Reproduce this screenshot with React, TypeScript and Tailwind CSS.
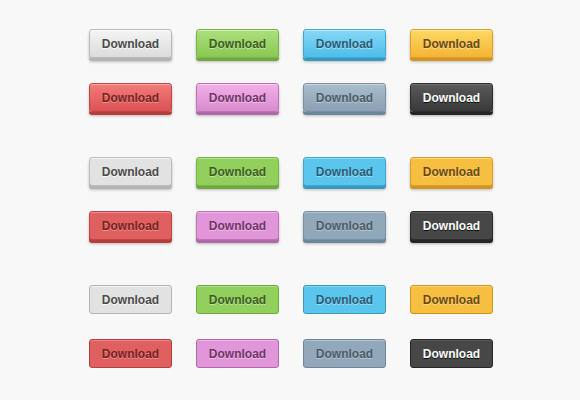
import React from "react";

type Btn = { cls: string };

const set1: string[] = [
  "bg-gradient-to-b from-[#f4f4f4] to-[#dcdcdc] border-[#b9b9b9] text-[#4a4a4a] shadow-[inset_0_1px_0_rgba(255,255,255,0.8),0_3px_0_#b4b4b4,0_4px_3px_rgba(0,0,0,0.25)] [text-shadow:0_1px_0_rgba(255,255,255,0.8)]",
  "bg-gradient-to-b from-[#addf7c] to-[#88c952] border-[#78b444] text-[#3d5c22] shadow-[inset_0_1px_0_rgba(255,255,255,0.45),0_3px_0_#6fa83f,0_4px_3px_rgba(0,0,0,0.25)] [text-shadow:0_1px_0_rgba(255,255,255,0.45)]",
  "bg-gradient-to-b from-[#86d8f5] to-[#4dbeea] border-[#3ea8d2] text-[#2b5a72] shadow-[inset_0_1px_0_rgba(255,255,255,0.45),0_3px_0_#3799c0,0_4px_3px_rgba(0,0,0,0.25)] [text-shadow:0_1px_0_rgba(255,255,255,0.45)]",
  "bg-gradient-to-b from-[#fdd862] to-[#f4b434] border-[#dc9e2a] text-[#6a4814] shadow-[inset_0_1px_0_rgba(255,255,255,0.45),0_3px_0_#cf9425,0_4px_3px_rgba(0,0,0,0.25)] [text-shadow:0_1px_0_rgba(255,255,255,0.45)]",
  "bg-gradient-to-b from-[#f17b7b] to-[#db5151] border-[#c04444] text-[#752222] shadow-[inset_0_1px_0_rgba(255,255,255,0.35),0_3px_0_#b43e3e,0_4px_3px_rgba(0,0,0,0.25)] [text-shadow:0_1px_0_rgba(255,255,255,0.35)]",
  "bg-gradient-to-b from-[#f2b0e6] to-[#d98bd0] border-[#bd72b3] text-[#70346a] shadow-[inset_0_1px_0_rgba(255,255,255,0.45),0_3px_0_#b069a6,0_4px_3px_rgba(0,0,0,0.25)] [text-shadow:0_1px_0_rgba(255,255,255,0.45)]",
  "bg-gradient-to-b from-[#a9bdcc] to-[#8aa1b4] border-[#7890a3] text-[#4a5a66] shadow-[inset_0_1px_0_rgba(255,255,255,0.4),0_3px_0_#6e8598,0_4px_3px_rgba(0,0,0,0.25)] [text-shadow:0_1px_0_rgba(255,255,255,0.4)]",
  "bg-gradient-to-b from-[#5a5a5a] to-[#393939] border-[#2c2c2c] text-white shadow-[inset_0_1px_0_rgba(255,255,255,0.15),0_3px_0_#262626,0_4px_3px_rgba(0,0,0,0.3)] [text-shadow:0_1px_0_rgba(0,0,0,0.8)]",
];

const set2: string[] = [
  "bg-[#e2e2e2] border-[#bcbcbc] text-[#4a4a4a] shadow-[inset_0_1px_0_rgba(255,255,255,0.7),0_3px_0_#b4b4b4,0_4px_3px_rgba(0,0,0,0.25)] [text-shadow:0_1px_0_rgba(255,255,255,0.8)]",
  "bg-[#92d05e] border-[#78b444] text-[#3d5c22] shadow-[inset_0_1px_0_rgba(255,255,255,0.35),0_3px_0_#6fa83f,0_4px_3px_rgba(0,0,0,0.25)] [text-shadow:0_1px_0_rgba(255,255,255,0.45)]",
  "bg-[#5ac6ee] border-[#3ea8d2] text-[#2b5a72] shadow-[inset_0_1px_0_rgba(255,255,255,0.35),0_3px_0_#3799c0,0_4px_3px_rgba(0,0,0,0.25)] [text-shadow:0_1px_0_rgba(255,255,255,0.45)]",
  "bg-[#f7bf3f] border-[#dc9e2a] text-[#6a4814] shadow-[inset_0_1px_0_rgba(255,255,255,0.35),0_3px_0_#cf9425,0_4px_3px_rgba(0,0,0,0.25)] [text-shadow:0_1px_0_rgba(255,255,255,0.45)]",
  "bg-[#e06060] border-[#c04444] text-[#752222] shadow-[inset_0_1px_0_rgba(255,255,255,0.3),0_3px_0_#b43e3e,0_4px_3px_rgba(0,0,0,0.25)] [text-shadow:0_1px_0_rgba(255,255,255,0.35)]",
  "bg-[#e096d8] border-[#bd72b3] text-[#70346a] shadow-[inset_0_1px_0_rgba(255,255,255,0.35),0_3px_0_#b069a6,0_4px_3px_rgba(0,0,0,0.25)] [text-shadow:0_1px_0_rgba(255,255,255,0.45)]",
  "bg-[#90a8ba] border-[#7890a3] text-[#4a5a66] shadow-[inset_0_1px_0_rgba(255,255,255,0.3),0_3px_0_#6e8598,0_4px_3px_rgba(0,0,0,0.25)] [text-shadow:0_1px_0_rgba(255,255,255,0.4)]",
  "bg-[#474747] border-[#2c2c2c] text-white shadow-[inset_0_1px_0_rgba(255,255,255,0.1),0_3px_0_#262626,0_4px_3px_rgba(0,0,0,0.3)] [text-shadow:0_1px_0_rgba(0,0,0,0.8)]",
];

const set3: string[] = [
  "bg-[#e2e2e2] border-[#b3b3b3] text-[#4a4a4a] shadow-[inset_0_1px_0_rgba(255,255,255,0.6)] [text-shadow:0_1px_0_rgba(255,255,255,0.8)]",
  "bg-[#92d05e] border-[#6fa83f] text-[#3d5c22] shadow-[inset_0_1px_0_rgba(255,255,255,0.3)] [text-shadow:0_1px_0_rgba(255,255,255,0.45)]",
  "bg-[#5ac6ee] border-[#3799c0] text-[#2b5a72] shadow-[inset_0_1px_0_rgba(255,255,255,0.3)] [text-shadow:0_1px_0_rgba(255,255,255,0.45)]",
  "bg-[#f7bf3f] border-[#cf9425] text-[#6a4814] shadow-[inset_0_1px_0_rgba(255,255,255,0.3)] [text-shadow:0_1px_0_rgba(255,255,255,0.45)]",
  "bg-[#e06060] border-[#b43e3e] text-[#752222] shadow-[inset_0_1px_0_rgba(255,255,255,0.25)] [text-shadow:0_1px_0_rgba(255,255,255,0.35)]",
  "bg-[#e096d8] border-[#b069a6] text-[#70346a] shadow-[inset_0_1px_0_rgba(255,255,255,0.3)] [text-shadow:0_1px_0_rgba(255,255,255,0.45)]",
  "bg-[#90a8ba] border-[#6e8598] text-[#4a5a66] shadow-[inset_0_1px_0_rgba(255,255,255,0.3)] [text-shadow:0_1px_0_rgba(255,255,255,0.4)]",
  "bg-[#474747] border-[#262626] text-white shadow-[inset_0_1px_0_rgba(255,255,255,0.1)] [text-shadow:0_1px_0_rgba(0,0,0,0.8)]",
];

function Button({ cls }: Btn) {
  return (
    <button
      className={
        "w-[83px] h-[29px] rounded-[3px] border flex items-center justify-center text-[12px] font-bold leading-none " +
        cls
      }
      style={{ fontFamily: '"Liberation Sans", Arial, sans-serif' }}
    >
      Download
    </button>
  );
}

function Group({ items }: { items: string[] }) {
  return (
    <div className="grid grid-cols-[repeat(4,83px)] gap-x-[24px] gap-y-[25px]">
      {items.map((c, i) => (
        <Button key={i} cls={c} />
      ))}
    </div>
  );
}

export default function App() {
  return (
    <div className="w-[580px] h-[400px] bg-[#f8f8f8] pl-[89px] pt-[29px] flex flex-col gap-[45px]">
      <Group items={set1} />
      <Group items={set2} />
      <Group items={set3} />
    </div>
  );
}
